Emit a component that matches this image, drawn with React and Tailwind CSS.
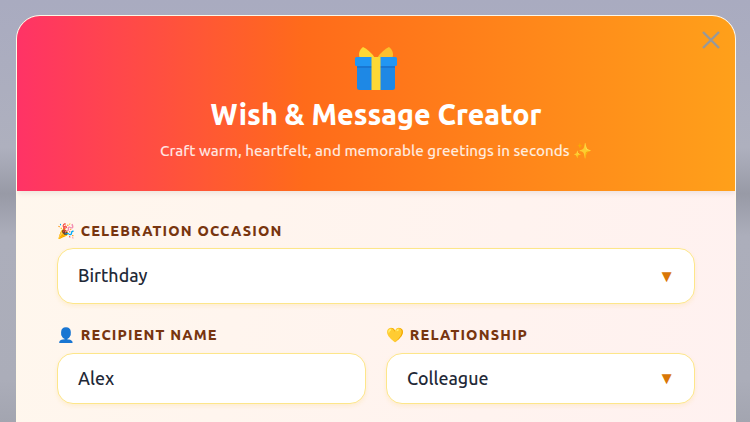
function Label({ emoji, text, className }) {
  return (
    <label className={`block text-[14.4px] leading-[21px] font-extrabold tracking-[1.15px] text-[#78350f] ${className}`}>
      {emoji} {text}
    </label>
  );
}
function Field({ value, select, tall }) {
  return (
    <div className={`flex items-center justify-between rounded-2xl border border-[#fde68a] bg-white pr-[19px] pb-[1px] pl-5 text-[17.8px] font-medium text-[#1f2937] shadow-[0_2px_4px_rgba(251,191,36,0.14)] ${tall ? "h-[56px]" : "h-[51px]"}`}>
      <span>{value}</span>
      {select && <span className="text-[17px] text-[#d97706]">▼</span>}
    </div>
  );
}
function Gift() {
  return (
    <svg width="44" height="44" viewBox="0 0 44 44" className="block">
      <path d="M21 11C18 6 13 2 9 0 5 3 4 8 6 11Z" fill="#fdd835" />
      <path d="M23 11C26 6 31 2 35 0 39 3 40 8 38 11Z" fill="#fbc02d" />
      <rect x="3" y="16" width="38" height="27" rx="2.5" fill="#1e88e5" />
      <rect x="1" y="10" width="42" height="9" rx="1.5" fill="#2196f3" />
      <rect x="3" y="19" width="38" height="2" fill="#1976d2" />
      <rect x="17.5" y="10" width="9" height="33" fill="#fdd835" />
    </svg>
  );
}
export default function App() {
  return (
    <div className="h-[422px] w-[750px] overflow-hidden bg-[linear-gradient(180deg,#a9abc0_0%,#aeb0be_35%,#989aa6_46%,#acaebb_56%,#abadb9_90%,#a3a5b0_100%)] pt-[15px] pr-[14px] pl-4 font-['Ubuntu','Noto_Sans',sans-serif]">
      <div className="h-[500px] overflow-hidden rounded-3xl border border-[#fff8e7] bg-[linear-gradient(100deg,#fff7ed,#fff1f0)]">
        <div className="relative flex h-[175px] flex-col items-center bg-[linear-gradient(90deg,#ff3366_0%,#ff6b1a_40%,#ffa01a_100%)] shadow-[0_2px_6px_rgba(0,0,0,0.08)]">
          <div className="mt-[31px]"><Gift /></div>
          <h1 className="mt-[7px] text-[28.5px] leading-[33px] font-extrabold text-white">Wish &amp; Message Creator</h1>
          <p className="mt-[9px] text-[15.2px] leading-[22px] font-medium text-white/85">Craft warm, heartfelt, and memorable greetings in seconds ✨</p>
          <button className="absolute top-[12px] right-[12px] flex size-6 items-center justify-center text-[#98999a]">
            <svg width="20" height="20" viewBox="0 0 20 20" fill="none" stroke="currentColor" strokeWidth="2.4"><path d="M2 2 18 18M18 2 2 18" /></svg>
          </button>
        </div>
        <div className="flex flex-col gap-[21px] px-10 pt-[30px]">
          <div>
            <Label className="mb-[6px]" emoji="🎉" text="CELEBRATION OCCASION" />
            <Field value="Birthday" select tall />
          </div>
          <div className="grid grid-cols-2 gap-5">
            <div>
              <Label className="mb-[7px]" emoji="👤" text="RECIPIENT NAME" />
              <Field value="Alex" />
            </div>
            <div>
              <Label className="mb-[7px]" emoji="💛" text="RELATIONSHIP" />
              <Field value="Colleague" select />
            </div>
          </div>
        </div>
      </div>
    </div>
  );
}
